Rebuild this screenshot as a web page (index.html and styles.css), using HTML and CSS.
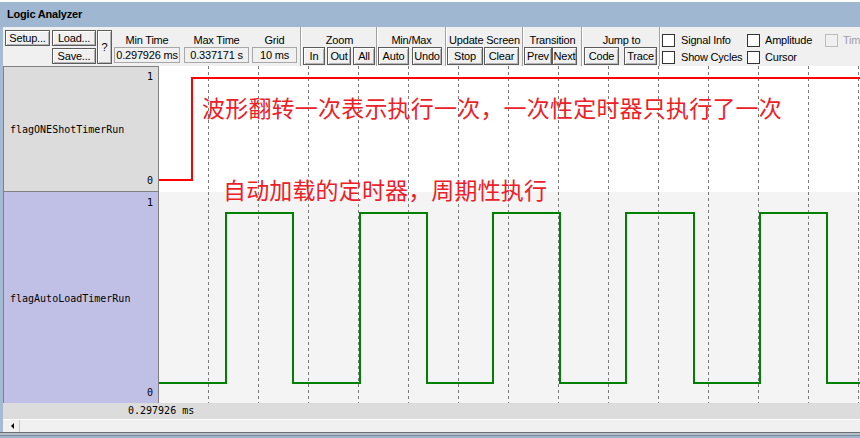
FILE: index.html
```html
<!DOCTYPE html>
<html>
<head>
<meta charset="utf-8">
<link rel="stylesheet" href="styles.css">
</head>
<body>
<div class="window">
  <div class="topline"></div>
  <div class="titlebar">Logic Analyzer</div>
  <div class="frame">
    <div class="toolbar">
      <div class="g0">
        <div class="btn b-setup">Setup...</div>
        <div class="stack">
          <div class="btn b-load">Load...</div>
          <div class="btn b-load">Save...</div>
        </div>
        <div class="btn b-q">?</div>
        <div class="field f-min"><div class="flabel">Min Time</div><div class="fval">0.297926 ms</div></div>
        <div class="field f-max"><div class="flabel">Max Time</div><div class="fval">0.337171 s</div></div>
        <div class="field f-grid"><div class="flabel">Grid</div><div class="fval">10 ms</div></div>
      </div>
      <div class="sep"></div>
      <div class="grp g-zoom">
        <div class="glabel">Zoom</div>
        <div class="brow"><div class="btn2 w-in">In</div><div class="btn2 w-out">Out</div><div class="btn2 w-all">All</div></div>
      </div>
      <div class="sep"></div>
      <div class="grp g-mm">
        <div class="glabel">Min/Max</div>
        <div class="brow"><div class="btn2 w-auto">Auto</div><div class="btn2 w-undo">Undo</div></div>
      </div>
      <div class="sep"></div>
      <div class="grp g-upd">
        <div class="glabel">Update Screen</div>
        <div class="brow"><div class="btn2 w-stop">Stop</div><div class="btn2 w-clear">Clear</div></div>
      </div>
      <div class="sep"></div>
      <div class="grp g-tr">
        <div class="glabel">Transition</div>
        <div class="brow"><div class="btn2 w-prev">Prev</div><div class="btn2 w-next">Next</div></div>
      </div>
      <div class="sep"></div>
      <div class="grp g-jump">
        <div class="glabel">Jump to</div>
        <div class="brow"><div class="btn2 w-code">Code</div><div class="btn2 w-trace">Trace</div></div>
      </div>
      <div class="sep"></div>
      <div class="checks">
        <div class="chk c1"><span class="box"></span><span>Signal Info</span></div>
        <div class="chk c2"><span class="box"></span><span>Amplitude</span></div>
        <div class="chk c3 dis"><span class="box"></span><span>Time</span></div>
        <div class="chk c1"><span class="box"></span><span>Show Cycles</span></div>
        <div class="chk c2"><span class="box"></span><span>Cursor</span></div>
      </div>
    </div>
    <div class="main">
      <div class="names">
        <div class="lane lane1">
          <div class="val">1</div>
          <div class="nm">flagONEShotTimerRun</div>
          <div class="val">0</div>
        </div>
        <div class="lane lane2">
          <div class="val">1</div>
          <div class="nm">flagAutoLoadTimerRun</div>
          <div class="val">0</div>
        </div>
      </div>
      <div class="plot">
        <div class="p1"></div>
        <div class="p2"></div>
        <svg class="wave" width="701" height="337" viewBox="0 0 701 337">
          <g class="grid" stroke="#7a7a7a" stroke-width="1" stroke-dasharray="3 3">
            <line x1="49.5" y1="0" x2="49.5" y2="337"/>
            <line x1="99.5" y1="0" x2="99.5" y2="337"/>
            <line x1="149.5" y1="0" x2="149.5" y2="337"/>
            <line x1="199.5" y1="0" x2="199.5" y2="337"/>
            <line x1="249.5" y1="0" x2="249.5" y2="337"/>
            <line x1="299.5" y1="0" x2="299.5" y2="337"/>
            <line x1="349.5" y1="0" x2="349.5" y2="337"/>
            <line x1="399.5" y1="0" x2="399.5" y2="337"/>
            <line x1="449.5" y1="0" x2="449.5" y2="337"/>
            <line x1="499.5" y1="0" x2="499.5" y2="337"/>
            <line x1="549.5" y1="0" x2="549.5" y2="337"/>
            <line x1="599.5" y1="0" x2="599.5" y2="337"/>
            <line x1="649.5" y1="0" x2="649.5" y2="337"/>
            <line x1="699.5" y1="0" x2="699.5" y2="337"/>
          </g>
          <path d="M0 114 H33 V12 H701" fill="none" stroke="#ff0000" stroke-width="2" shape-rendering="crispEdges"/>
          <path d="M0 317 H67 V147 H134 V317 H201 V147 H268 V317 H334 V147 H401 V317 H467 V147 H535 V317 H601 V147 H668 V317 H701" fill="none" stroke="#008000" stroke-width="2" shape-rendering="crispEdges"/>
        </svg>
        <div class="note n1">波形翻转一次表示执行一次，一次性定时器只执行了一次</div>
        <div class="note n2">自动加载的定时器，周期性执行</div>
      </div>
    </div>
    <div class="ruler">0.297926 ms</div>
    <div class="scroll"><div class="sbtn"><span class="arrow"></span></div></div>
  </div>
  <div class="bottom"></div>
</div>
</body>
</html>
```

FILE: styles.css
```css
html, body {
  margin: 0;
  padding: 0;
}
body {
  width: 860px;
  height: 438px;
  overflow: hidden;
  background: #fff;
  font-family: "Liberation Sans", Arial, sans-serif;
  font-size: 11px;
  letter-spacing: -0.2px;
  color: #000;
}
.window {
  width: 860px;
  height: 438px;
  display: flex;
  flex-direction: column;
  background: #a5bbd3;
}
.topline {
  height: 2px;
  background: #fdfdfd;
}
.titlebar {
  height: 25px;
  line-height: 25px;
  padding-left: 7px;
  font-weight: bold;
  background: #9fb7d1;
}
.frame {
  height: 405px;
  margin-left: 3px;
  display: flex;
  flex-direction: column;
  background: #f0f0f0;
}

/* toolbar */
.toolbar {
  height: 39px;
  display: flex;
  background: #f0f0f0;
  overflow: hidden;
  white-space: nowrap;
}
.sep {
  width: 1px;
  border-right: 1px solid #fff;
  background: #a0a0a0;
  flex: none;
}
.btn, .btn2 {
  box-sizing: border-box;
  border: 1px solid #5c5c5c;
  box-shadow: inset 1px 1px 0 #fff, inset -1px -1px 0 #b4b4b4;
  background: #f0f0f0;
  text-align: center;
  flex: none;
}
.g0 {
  width: 297px;
  flex: none;
  display: flex;
  align-items: flex-start;
  padding: 3px 0 0 2px;
  box-sizing: border-box;
}
.btn {
  height: 16px;
  line-height: 14px;
}
.b-setup { width: 45px; }
.stack {
  margin-left: 2px;
  display: flex;
  flex-direction: column;
  gap: 2px;
}
.b-load { width: 44px; }
.b-q {
  margin-left: 1px;
  width: 15px;
  height: 34px;
  line-height: 32px;
}
.field {
  margin-top: 3px;
  flex: none;
}
.f-min { margin-left: 2px; width: 66px; }
.f-max { margin-left: 4px; width: 65px; }
.f-grid { margin-left: 3px; width: 45px; }
.flabel {
  height: 14px;
  line-height: 14px;
  text-align: center;
}
.fval {
  box-sizing: border-box;
  height: 16px;
  line-height: 14px;
  border: 1px solid #a8a8a8;
  background: #f0f0f0;
  text-align: center;
}
.grp {
  flex: none;
  box-sizing: border-box;
  padding-top: 6px;
}
.glabel {
  height: 14px;
  line-height: 14px;
  text-align: center;
}
.brow {
  display: flex;
}
.btn2 {
  height: 18px;
  line-height: 16px;
}
.g-zoom { width: 74px; padding-left: 1px; }
.g-zoom .brow { gap: 2px; }
.w-in { width: 22px; }
.w-out { width: 24px; }
.w-all { width: 22px; }
.g-mm { width: 67px; }
.g-mm .brow { gap: 3px; }
.w-auto { width: 31px; }
.w-undo { width: 30px; }
.g-upd { width: 75px; }
.g-upd .brow { gap: 1px; }
.w-stop { width: 36px; }
.w-clear { width: 35px; }
.g-tr { width: 57px; }
.w-prev { width: 28px; }
.w-next { width: 25px; }
.g-jump { width: 76px; padding-left: 1px; }
.g-jump .brow { gap: 5px; }
.w-code { width: 35px; }
.w-trace { width: 33px; }

.checks {
  flex: none;
  display: grid;
  grid-template-columns: 85px 78px 60px;
  grid-auto-rows: 17px;
  padding: 7px 0 0 1px;
  box-sizing: border-box;
}
.chk {
  display: flex;
  align-items: flex-start;
  line-height: 13px;
}
.chk .box {
  box-sizing: border-box;
  width: 13px;
  height: 13px;
  border: 1px solid #333;
  background: #fff;
  margin-right: 6px;
  flex: none;
}
.c2 .box, .c3 .box { margin-right: 5px; }
.dis { color: #a0a0a0; }
.dis .box {
  border-color: #bcbcbc;
  background: #f0f0f0;
}

/* main area */
.main {
  height: 337px;
  display: flex;
}
.names {
  width: 156px;
  flex: none;
  box-sizing: border-box;
  border: 1px solid #808080;
  border-bottom: none;
  display: flex;
  flex-direction: column;
  font-family: "DejaVu Sans Mono", "Liberation Mono", monospace;
  font-size: 10px;
  letter-spacing: 0;
}
.lane {
  display: flex;
  flex-direction: column;
  box-sizing: border-box;
}
.lane1 {
  height: 125px;
  background: #dcdcdc;
  border-bottom: 1px solid #808080;
  padding: 3px 0 3px 0;
}
.lane2 {
  flex: 1;
  background: #c0c0e6;
  padding: 4px 0 3px 0;
}
.val {
  height: 14px;
  line-height: 14px;
  text-align: right;
  padding-right: 5px;
}
.nm {
  flex: 1;
  display: flex;
  align-items: center;
  padding-left: 6px;
}
.plot {
  flex: 1;
  position: relative;
  overflow: hidden;
}
.p1 {
  height: 126px;
  background: #fff;
}
.p2 {
  height: 211px;
  background: #f4f4f4;
}
.wave {
  position: absolute;
  left: 0;
  top: 0;
}
.note {
  position: absolute;
  font-family: "Noto Sans CJK SC", "Noto Sans", sans-serif;
  color: #ec2028;
  white-space: nowrap;
  font-size: 23px;
  line-height: 23px;
  letter-spacing: 0.15px;
}
.n1 {
  left: 43px;
  top: 30px;
  letter-spacing: 0.2px;
}
.n2 {
  left: 64px;
  top: 112px;
}

/* bottom */
.ruler {
  height: 16px;
  line-height: 16px;
  background: #dcdcdc;
  padding-left: 125px;
  font-family: "DejaVu Sans Mono", "Liberation Mono", monospace;
  font-size: 10px;
  letter-spacing: 0;
}
.scroll {
  height: 12px;
  border-top: 1px solid #fff;
  background: #f0f0f0;
  display: flex;
}
.sbtn {
  margin-left: 2px;
  width: 15px;
  height: 12px;
  box-sizing: border-box;
  border-right: 1px solid #c8c8c8;
  display: flex;
  align-items: center;
  justify-content: center;
}
.arrow {
  width: 0;
  height: 0;
  border-top: 3px solid transparent;
  border-bottom: 3px solid transparent;
  border-right: 3px solid #000;
}
.bottom {
  height: 6px;
  background: linear-gradient(to bottom, #6e6e6e 0, #6e6e6e 1px, #b2bfcc 1px, #b2bfcc 3px, #7d8a99 3px, #7d8a99 4px, #9fb4cc 4px);
}
```
